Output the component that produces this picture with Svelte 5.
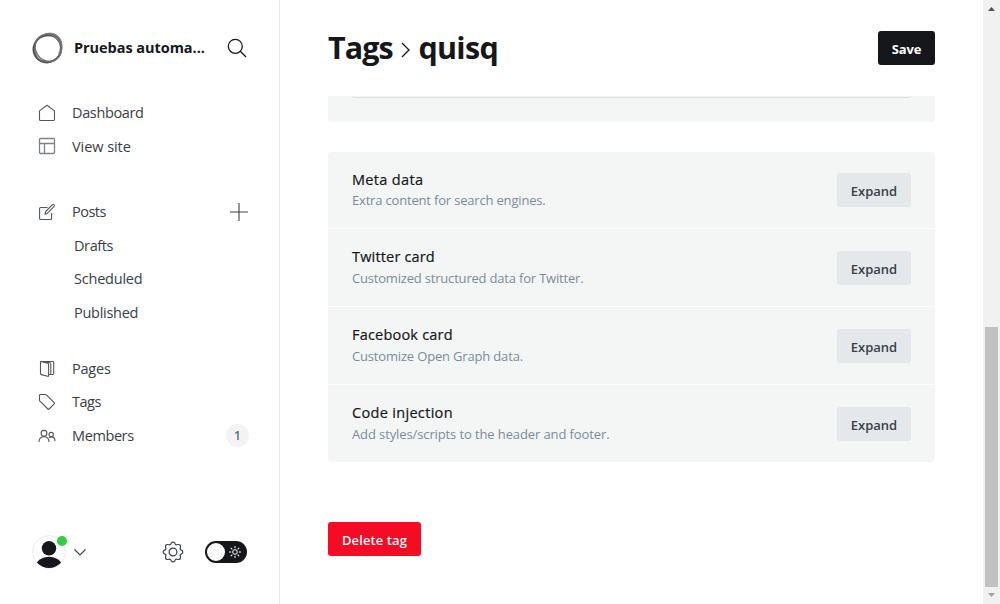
<script>
  const cards = [
    { title: 'Meta data', text: 'Extra content for search engines.' },
    { title: 'Twitter card', text: 'Customized structured data for Twitter.' },
    { title: 'Facebook card', text: 'Customize Open Graph data.' },
    { title: 'Code injection', text: 'Add styles/scripts to the header and footer.' }
  ];
  const rays = Array.from({ length: 8 }, (_, i) => i * 45);
</script>

<div class="app">
  <aside>
    <div class="brand">
      <svg class="logo" width="32" height="32" viewBox="0 0 32 32" fill="none">
        <path d="M12 2.500C18-.5 25 1.500 27.500 5.500 31 10 31 18 27.500 23L26 21.500C28.500 16 28 10.500 24.500 7 20.500 3.500 16 3 12 2.500z" fill="#b5b5b5" />
        <ellipse cx="15.400" cy="16.800" rx="14" ry="13.400" stroke="#4a4a4a" stroke-width="2" transform="rotate(-30 15.400 16.800)" />
        <ellipse cx="16.200" cy="15.800" rx="14" ry="12.700" stroke="#777" stroke-width="1.600" transform="rotate(55 16.200 15.800)" />
        <ellipse cx="16" cy="16" rx="14.400" ry="13.100" stroke="#666" stroke-width="1.100" transform="rotate(-62 16 16)" />
        <path d="M11 2.800C17-.2 24 1 27.500 6c3.500 5.500 3 11 0 16.500" stroke="#777" />
      </svg>
      <strong>Pruebas automa...</strong>
      <svg class="search" width="20" height="20" viewBox="0 0 20 20" fill="none" stroke="#15171a" stroke-width="1.300">
        <circle cx="8.300" cy="8.300" r="7" /><path d="M13.300 13.300 19 19" />
      </svg>
    </div>

    <nav>
      <div class="row">
        <svg viewBox="0 0 18 18"><path d="M1.500 6.900 9 1.300l7.500 5.600v8.600q0 1-1 1h-13q-1 0-1-1z" /></svg>
        <span class="l-dash">Dashboard</span>
      </div>
      <div class="row">
        <svg class="pale" viewBox="0 0 18 18"><rect x="1.500" y="1.500" width="15" height="15" rx="1" /><path d="M1.500 6.500h15M6.500 6.500v10" /></svg>
        <span class="l-view">View site</span>
      </div>
      <div class="row posts">
        <svg viewBox="0 0 18 18"><path d="M9.500 4.500H2.600q-1 0-1 1v10q0 1 1 1h10q1 0 1-1V10M7 11.300l.7-2.800 6.800-6.800q.7-.6 1.500.1.700.8.100 1.500L9.300 10.400z" /></svg>
        <span class="l-posts">Posts</span>
        <svg class="plus" viewBox="0 0 18 18"><path d="M9 0v18M0 9h18" /></svg>
      </div>
      <div class="row sub"><span class="l-drafts">Drafts</span></div>
      <div class="row sub"><span class="l-sched">Scheduled</span></div>
      <div class="row sub"><span class="l-pub">Published</span></div>
      <div class="row pages">
        <svg viewBox="0 0 18 18"><path d="M2.500 1.500 9.800 3.300q.8.200.8 1v11.300q0 .9-.9.700l-6.300-1.700q-.9-.2-.9-1zM2.500 1.500h12.300q.9 0 .9.900v11.200q0 .9-.9.900h-4M7 1.500l5 1.200q.8.200.8 1v10.800" /></svg>
        <span class="l-pages">Pages</span>
      </div>
      <div class="row">
        <svg viewBox="0 0 18 18"><path d="M1.500 2.300q0-.8.800-.8h5.200q.5 0 .9.400l7.800 7.800q.6.600 0 1.200l-5.100 5.100q-.6.600-1.200 0L1.900 8.200q-.4-.4-.4-.9z" /></svg>
        <span class="l-tags">Tags</span>
      </div>
      <div class="row">
        <svg viewBox="0 0 18 18"><circle cx="6" cy="6.300" r="2.900" /><circle cx="13.200" cy="7.600" r="2.200" /><path d="M1 15c0-3.400 1.800-5.200 5-5.200s5 1.800 5 5.200M11 10.900c.7-.7 1.500-1 2.300-1 2.400 0 3.700 1.600 3.700 4.400" /></svg>
        <span class="l-members">Members</span>
        <span class="count">1</span>
      </div>
    </nav>

    <div class="bottom">
      <div class="avatar">
        <svg width="34" height="34" viewBox="0 0 34 34">
          <defs><clipPath id="face"><circle cx="17" cy="17" r="16" /></clipPath></defs>
          <circle cx="17" cy="17" r="16.400" fill="#fff" stroke="#e3e5e7" stroke-width=".8" />
          <g fill="#15171a" clip-path="url(#face)"><circle cx="17" cy="13.300" r="7.200" /><ellipse cx="17" cy="31" rx="13" ry="9.200" /></g>
        </svg>
        <i></i>
      </div>
      <svg class="chev" width="12" height="7" viewBox="0 0 12 7" fill="none" stroke="#394047" stroke-width="1.100"><path d="M.5.5 6 6 11.500.5" /></svg>
      <svg class="gear" width="22" height="22" viewBox="0 0 22 22" fill="none" stroke="#394047" stroke-width="1.200">
        <circle cx="11" cy="11" r="3.900" />
        <path stroke-linejoin="round" d="M9.200 2.200Q11 .2 12.800 2.200 13.300 4.700 16 3.500 18.700 3.300 18.500 6 17.300 8.700 19.800 9.200 21.800 11 19.800 12.800 17.300 13.300 18.500 16 18.700 18.700 16 18.500 13.300 17.300 12.800 19.800 11 21.800 9.200 19.800 8.700 17.300 6 18.500 3.300 18.700 3.500 16 4.700 13.300 2.200 12.800.2 11 2.200 9.200 4.700 8.700 3.500 6 3.300 3.300 6 3.500 8.700 4.700 9.200 2.200z" />
      </svg>
      <div class="toggle">
        <b></b>
        <svg width="12" height="12" viewBox="0 0 12 12" fill="none" stroke="#fff">
          <circle cx="6" cy="6" r="2.300" />
          {#each rays as a}<path d="M6 0v2.200" transform="rotate({a} 6 6)" />{/each}
        </svg>
      </div>
    </div>
  </aside>

  <main>
    <header>
      <h1>
        <span class="h-tags">Tags</span>
        <svg width="9" height="16" viewBox="0 0 9 16" fill="none" stroke="#15171a" stroke-width="1.300"><path d="M1 1l7 7-7 7" /></svg>
        <span class="h-name">quisq</span>
      </h1>
      <button class="save"><span>Save</span></button>
    </header>
    <section class="previous"><div class="field"></div></section>
    <section class="cards">
      {#each cards as card, i}
        <div class="card c{i}">
          <div class="copy">
            <h4>{card.title}</h4>
            <p>{card.text}</p>
          </div>
          <button class="expand"><span>Expand</span></button>
        </div>
      {/each}
    </section>
    <button class="delete"><span>Delete tag</span></button>
  </main>

  <div class="scroll">
    <svg width="17" height="17" viewBox="0 0 17 17"><path d="M5 11h7L8.500 7z" fill="#505050" /></svg>
    <div class="thumb"></div>
    <svg width="17" height="17" viewBox="0 0 17 17"><path d="M5 6h7L8.500 10z" fill="#a3a3a3" /></svg>
  </div>
</div>

<style>
  :global(body) { margin: 0; overflow: hidden; }
  * { box-sizing: border-box; }
  .app { display: flex; width: 1000px; height: 604px; background: #fff; color: #15171a; font-family: "Open Sans", "Noto Sans", sans-serif; overflow: hidden; }
  span, h4, p, strong { white-space: nowrap; }
  svg { flex: none; display: block; }
  aside { width: 280px; flex: none; border-right: 1px solid #e6e9eb; display: flex; flex-direction: column; }
  .brand { height: 96px; display: flex; align-items: center; padding-left: 32px; }
  .brand strong { width: 153px; margin: -2px 0 0 10px; font-size: 14.500px; font-weight: 700; letter-spacing: -.05px; }
  nav { height: 357px; }
  .row { height: 33.500px; display: flex; align-items: center; padding: 0 30px 0 38px; font-size: 14.500px; color: #394047; }
  .row > span:not(.count) { margin-top: -1px; }
  .row > span.l-view, .row > span.l-drafts, .row > span.l-pub { margin-top: 1px; }
  .row svg { width: 18px; height: 18px; margin-right: 16px; fill: none; stroke: #50575d; stroke-width: 1.100; stroke-linejoin: round; }
  .row svg.pale { stroke: #7c8389; stroke-width: 1.300; }
  .row svg.plus { margin: 0 1px 0 auto; stroke: #394047; }
  .posts { margin-top: 32px; }
  .pages { margin-top: 23px; }
  .sub { padding-left: 74px; }
  .l-dash { letter-spacing: -.36px; }
  .l-view { letter-spacing: -.06px; }
  .l-posts { letter-spacing: -.5px; }
  .l-drafts { letter-spacing: -.4px; }
  .l-sched { letter-spacing: -.22px; }
  .l-pub { letter-spacing: -.27px; }
  .l-pages { letter-spacing: -.22px; }
  .l-tags { letter-spacing: -.5px; }
  .l-members { letter-spacing: -.4px; }
  .count { margin-left: auto; width: 23px; height: 23px; border-radius: 50%; background: #f1f3f5; color: #5a6b86; font-size: 12px; font-weight: 600; line-height: 23px; text-align: center; }
  .bottom { margin-top: auto; height: 105px; display: flex; align-items: center; padding: 1px 32px 0 32px; }
  .avatar { position: relative; width: 34px; height: 34px; }
  .avatar i { position: absolute; left: 25px; top: 1px; width: 10px; height: 10px; border-radius: 50%; background: #30cf43; }
  .chev { margin-left: 8px; }
  .gear { margin-left: 76px; }
  .toggle { width: 42px; height: 22px; margin-left: 21px; border-radius: 11px; background: #15171a; display: flex; align-items: center; padding: 0 6px 0 2px; justify-content: space-between; }
  .toggle b { width: 18px; height: 18px; border-radius: 50%; background: #fff; }
  main { width: 607px; margin-left: 48px; flex: none; }
  header { height: 96px; display: flex; align-items: center; justify-content: space-between; }
  h1 { margin: -3px 0 0; display: flex; align-items: center; font-size: 30.500px; line-height: 40px; font-weight: 700; }
  .h-tags { letter-spacing: -.9px; }
  .h-name { letter-spacing: -.7px; }
  h1 svg { margin: 6px 8.500px 0 8px; }
  button { border: 0; border-radius: 3px; height: 34px; padding: 0; font: 600 13px/34px "Open Sans", "Noto Sans", sans-serif; display: flex; justify-content: center; }
  button span { position: relative; top: 1px; }
  .save { width: 57px; background: #15171a; color: #fff; font-weight: 700; letter-spacing: -.1px; }
  .previous { height: 26px; background: #f4f6f6; border-radius: 0 0 3px 3px; padding: 0 24px; }
  .field { height: 2px; border: 1px solid #dde1e5; border-top: 0; border-radius: 0 0 3px 3px; }
  .cards { margin-top: 30px; height: 310px; border-radius: 3px; overflow: hidden; background: #f4f6f6; }
  .card { height: 78px; display: flex; justify-content: space-between; align-items: flex-start; padding: 21px 24px 0; border-top: 1px solid #fff; }
  .copy { margin-top: -4px; }
  .card h4 { margin: 0; font-size: 14.500px; line-height: 22px; font-weight: 400; -webkit-text-stroke: .2px #15171a; }
  .card p { margin: 0; font-size: 13px; line-height: 21px; color: #7c8b9a; }
  .c0 { height: 76px; border: 0; }
  .c0 h4 { letter-spacing: .33px; }
  .c0 p { letter-spacing: -.18px; margin-top: -1px; }
  .c1 h4 { letter-spacing: .17px; }
  .c1 p { letter-spacing: -.19px; }
  .c2 h4 { letter-spacing: .2px; }
  .c2 p { letter-spacing: -.17px; }
  .c3 h4 { letter-spacing: .32px; }
  .c3 p { letter-spacing: -.11px; }
  .expand { width: 74px; margin-top: 1px; background: #e4e8eb; color: #394047; }
  .c0 .expand { margin-top: 0; }
  .delete { margin-top: 60px; width: 93px; background: #f50b23; color: #fff; letter-spacing: .1px; }
  .scroll { margin-left: auto; width: 17px; background: #f1f1f1; display: flex; flex-direction: column; }
  .thumb { width: 13px; height: 260px; margin: 310px 0 0 2px; background: #c1c1c1; }
</style>
